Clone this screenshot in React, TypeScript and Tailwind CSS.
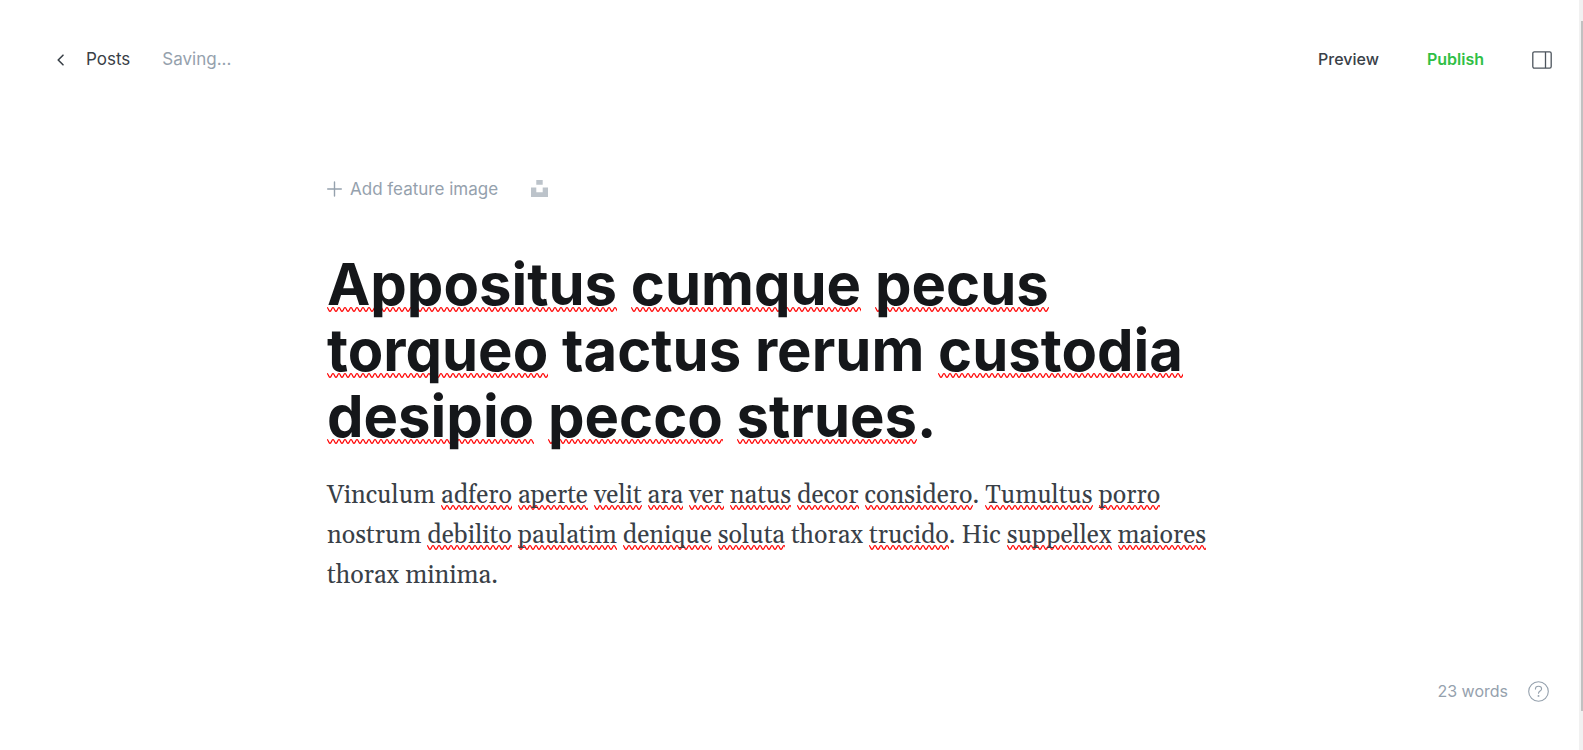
import { Fragment } from "react";

type Word = { text: string; misspelled?: boolean; tail?: string };

const parse = (source: string): Word[] =>
  source.split(" ").map((token) => {
    const match = /^\*(\w+)(.*)$/.exec(token);
    return match ? { text: match[1], misspelled: true, tail: match[2] } : { text: token };
  });

const titleLines = [
  "*Appositus *cumque *pecus",
  "*torqueo tactus rerum *custodia",
  "*desipio *pecco *strues.",
];

const bodyLines = [
  "Vinculum *adfero *aperte *velit *ara *ver *natus *decor *considero. *Tumultus *porro",
  "nostrum *debilito *paulatim *denique *soluta thorax *trucido. Hic *suppellex *maiores",
  "thorax minima.",
];

const squiggle =
  "bg-[url(data:image/svg+xml,%3Csvg%20xmlns=%22http://www.w3.org/2000/svg%22%20width=%226%22%20height=%225%22%3E%3Cpath%20d=%22M-3%204.3C-1.5%204.3-1.5%20.7%200%20.7S1.5%204.3%203%204.3%204.5%20.7%206%20.7%207.5%204.3%209%204.3%22%20fill=%22none%22%20stroke=%22red%22%20stroke-width=%221.2%22/%3E%3C/svg%3E)] bg-repeat-x";

function Prose({ line, underline }: { line: string; underline: string }) {
  return (
    <span className="block">
      {parse(line).map((word, i) => (
        <Fragment key={i}>
          {i > 0 && " "}
          {word.misspelled ? (
            <span className={`${squiggle} ${underline}`}>{word.text}</span>
          ) : (
            word.text
          )}
          {word.tail}
        </Fragment>
      ))}
    </span>
  );
}

export default function App() {
  return (
    <div className="flex min-h-screen bg-white font-['Inter',sans-serif] text-[#394047]">
      <div className="flex min-w-0 flex-1 flex-col">
        <header className="flex h-[118px] items-center justify-between pr-[27px] pl-14 text-[17px] leading-6">
          <div className="flex items-center gap-8">
            <a href="#posts" className="flex items-center gap-5">
              <svg width="10" height="16" viewBox="0 -2 10 16" fill="none" stroke="currentColor" strokeWidth="1.6" strokeLinecap="round" strokeLinejoin="round" aria-hidden="true">
                <path d="M7 2.2 2.2 7 7 11.8" />
              </svg>
              Posts
            </a>
            <span className="text-[#95a1ad]">Saving...</span>
          </div>
          <div className="flex items-center gap-12 text-base">
            <button type="button" className="font-medium">Preview</button>
            <button type="button" className="font-semibold text-[#30bf45]">Publish</button>
            <button type="button" aria-label="Settings">
              <svg width="20" height="20" viewBox="0 -2 20 20" fill="none" stroke="#4d555d" strokeWidth="1.3" aria-hidden="true">
                <rect x="0.8" y="0.8" width="18.4" height="16.4" rx="1.6" />
                <path d="M13.5 1v16" />
              </svg>
            </button>
          </div>
        </header>

        <main className="mx-auto w-full max-w-[925px] flex-1 pt-[59px]">
          <div className="flex h-[23px] items-center gap-[33px] text-[17px] leading-6 text-[#95a1ad]">
            <button type="button" className="flex items-center gap-2">
              <svg width="15" height="16" viewBox="0 0 15 16" fill="none" stroke="currentColor" strokeWidth="1.4" strokeLinecap="round" aria-hidden="true">
                <path d="M7.5 1v14M.7 8h13.6" />
              </svg>
              Add feature image
            </button>
            <button type="button" aria-label="Unsplash">
              <svg width="17" height="17" viewBox="0 0 17 17" fill="#bcc3ca" aria-hidden="true">
                <path d="M5.3 0h6.4v4.7H5.3zM0 7.5h5.3v4.7h6.4V7.5H17V17H0z" />
              </svg>
            </button>
          </div>
          <h1 className="mt-[51px] text-[58px] leading-[66px] font-bold text-[#15171a]">
            {titleLines.map((line) => (
              <Prose key={line} line={line} underline="bg-[position:0_calc(100%-7px)]" />
            ))}
          </h1>
          <p className="mt-[27px] font-[Gelasio,Georgia,'Liberation_Serif',serif] text-[25px] leading-10">
            {bodyLines.map((line) => (
              <Prose key={line} line={line} underline="bg-[position:0_calc(100%-2px)]" />
            ))}
          </p>
        </main>

        <footer className="flex h-[118px] items-center justify-end gap-5 pr-[30px] text-base text-[#95a1ad]">
          <span>23 words</span>
          <a href="#help" aria-label="Help">
            <svg width="21" height="21" viewBox="0 0 21 21" fill="none" stroke="currentColor" strokeWidth="1.1" strokeLinecap="round" aria-hidden="true">
              <circle cx="10.5" cy="10.5" r="9.8" />
              <path d="M7.4 8.1c0-1.8 1.3-2.9 3.1-2.9s3.1 1.1 3.1 2.7c0 2-3.1 2.3-3.1 4.3" />
              <circle cx="10.5" cy="14.9" r=".4" fill="currentColor" />
            </svg>
          </a>
        </footer>
      </div>
      <div className="flex w-1 justify-end bg-[#f1f1f1] pt-[21px] pb-[39px]" aria-hidden="true">
        <div className="w-0.5 bg-[#c1c1c1]" />
      </div>
    </div>
  );
}
